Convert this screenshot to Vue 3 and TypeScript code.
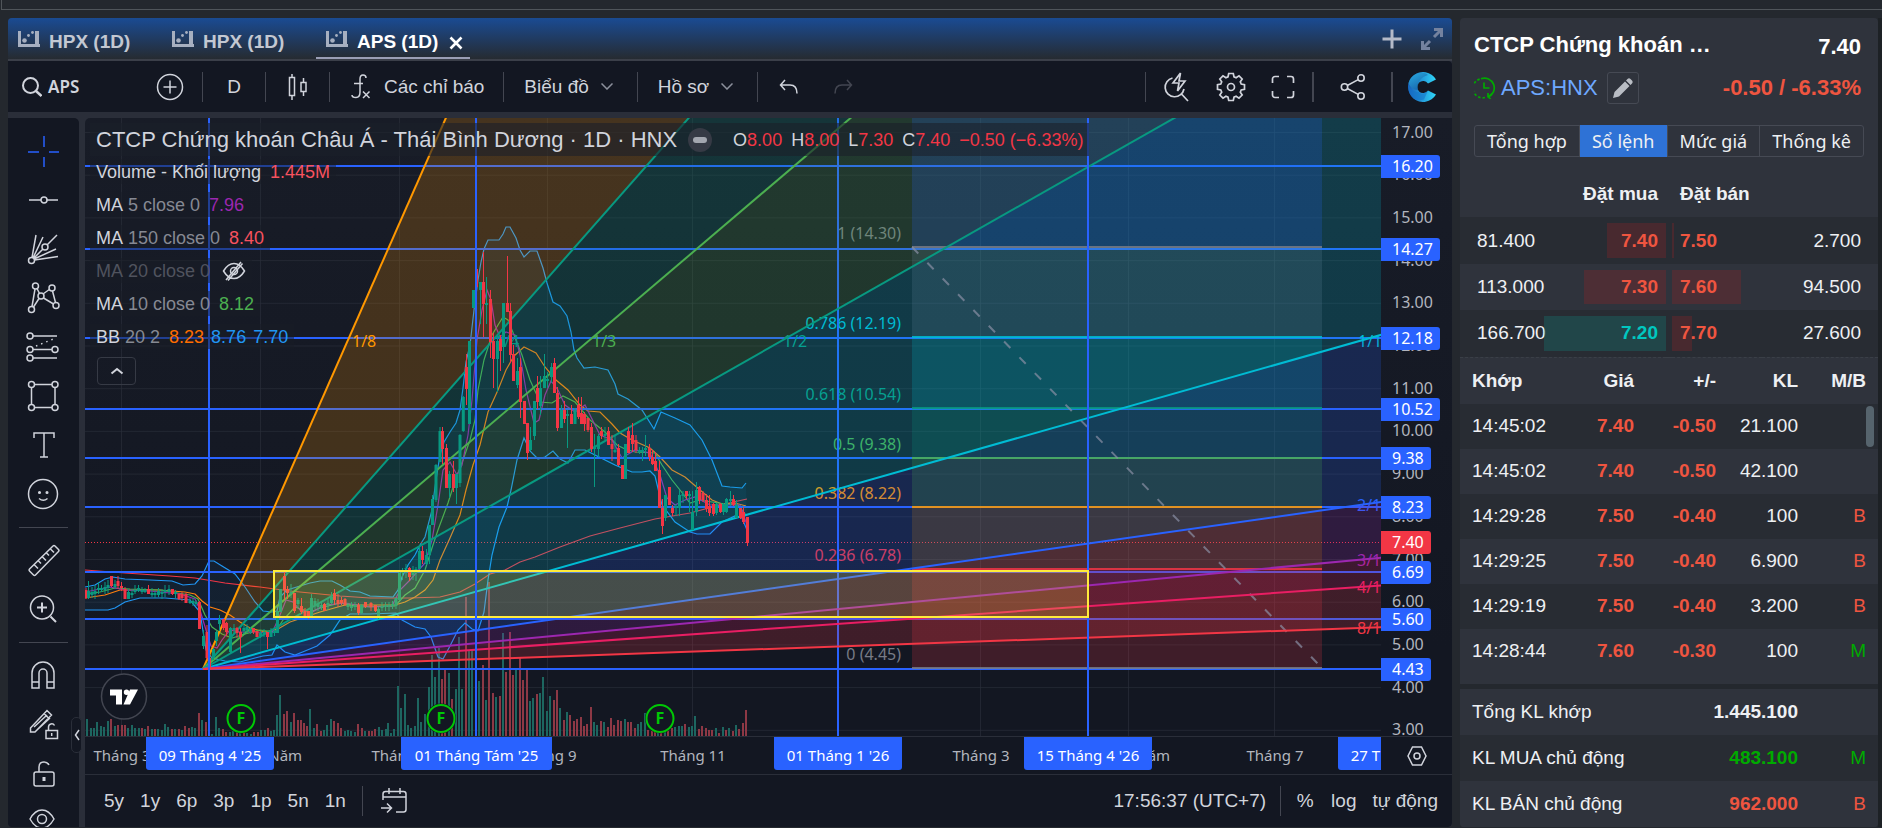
<script setup lang="ts">
import { ref } from 'vue'

interface Candle { x: number; high: number; top: number; bottom: number; low: number; up: boolean }
interface Bar { x: number; h: number; up: boolean }

const tabs = ['HPX (1D)', 'HPX (1D)', 'APS (1D)']
const activeTab = ref(2)

// x, wick top, body top, body bottom, wick bottom, direction
const candleSource = `
86 588 590 598 599 r;88.5 581 591 598 599 g;92 587 592 595 598 g;95 585 591 594 599 g;98.5 582 588 590 594 g;101.5 585 588 590 592 g;105 582 587 590 594 g;108 580 585 588 593 g;
111.5 576 576 586 587 r;115 580 584 587 589 g;118 576 581 586 589 r;121.5 582 586 588 591 r;125 587 589 599 599 r;128.5 589 592 599 599 g;132 589 593 595 598 g;135 585 590 592 594 g;138.5 585 588 591 592 g;
142 587 590 592 594 g;145 588 590 592 593 g;148.5 585 589 594 594 r;152 588 593 595 597 g;155 590 593 595 598 g;158.5 588 591 595 597 g;162 589 592 594 599 g;165 585 590 592 597 g;169 585 589 592 595 g;172.5 589 589 594 595 r;175.5 590 592 594 598 g;
179 593 594 599 600 r;182 592 594 598 601 r;186 593 594 603 603 r;190 598 601 603 604 g;193 598 601 603 606 g;196 600 602 604 606 g;199.5 601 602 629 629 r;203.5 630 636 646 649 g;207 625 632 658 660 r;209.5 655 658 668 668 r;213.5 648 649 658 660 g;
216.5 631 632 641 646 g;219.5 615 619 624 631 g;223.5 619 619 628 630 r;226.5 622 623 632 636 r;230.5 627 628 652 653 g;234 624 628 630 634 g;237 627 628 633 638 r;240.5 628 632 637 653 r;244 625 628 631 634 g;247 624 627 630 633 g;250.5 627 629 632 634 g;253.5 628 628 632 634 r;257 631 631 637 637 r;260.5 631 633 636 638 g;
264 629 632 634 637 g;267.5 632 632 637 649 r;271 628 632 637 637 g;274.5 630 631 633 636 g;277.5 611 611 633 633 g;280.5 589 589 612 612 g;284.5 572 576 590 600 r;287.5 586 589 593 599 r;291 584 592 594 598 g;294.5 593 593 611 613 r;298 598 600 604 608 g;301.5 598 606 612 614 r;305 608 611 616 617 r;308.5 611 611 617 619 r;
311.5 594 598 617 617 g;315 598 601 605 609 g;318 599 604 607 611 g;321.5 602 605 607 610 g;324.5 603 604 611 611 r;328 598 603 605 610 g;331.5 592 597 603 604 g;334.5 589 593 600 605 r;338 594 600 604 607 r;341.5 597 600 603 605 r;345 598 599 605 606 r;348 603 605 607 610 g;351.5 602 606 608 611 g;
355 602 605 607 610 g;358.5 603 605 613 615 r;361.5 604 605 613 614 g;365.5 602 602 607 608 r;371 602 603 607 611 r;375.5 605 605 611 612 r;378.5 607 609 616 619 g;382 602 606 608 611 g;385.5 602 605 607 611 g;389 602 605 607 611 g;392.5 601 604 606 609 g;396 598 598 606 609 g;399.5 572 573 600 600 g;402.5 568 571 573 580 g;406 564 568 569 578 g;409.5 567 568 577 581 r;
413 566 570 575 580 g;416 567 569 573 581 g;419.5 545 551 569 569 g;422.5 546 551 560 564 r;426.5 549 555 564 565 g;429.5 525 525 555 564 g;432.5 495 499 525 525 g;436 464 465 500 502 g;440 427 431 462 462 g;442.5 427 431 449 464 r;446.5 444 448 488 488 r;449.5 471 474 488 498 g;453.5 461 474 488 492 r;456.5 474 474 488 504 g;460 434 435 483 487 g;
463.3 396 397 431 432 g;466.5 354 367 389 405 r;469.5 341 341 424 424 g;473.5 290 290 308 308 g;476.5 252 269 287 294 r;480.5 282 282 290 324 g;483.5 252 282 304 337 r;486.5 277 303 305 324 g;490.5 290 299 342 358 r;493.5 333 341 359 388 r;497.5 335 341 359 392 g;500.5 335 339 351 371 r;503.5 303 303 347 363 g;507.5 256 303 312 312 r;510.5 303 311 355 363 r;
513.5 345 354 381 381 r;517.5 358 371 385 388 g;520.5 358 367 402 418 r;524.5 401 401 424 424 r;527.5 423 423 453 460 r;530.5 427 440 450 451 g;534.5 401 401 436 440 g;537.5 376 388 402 409 r;540.5 376 388 406 415 g;544.5 354 376 388 388 g;547.5 372 379 381 388 g;551.5 363 367 377 383 g;554.5 358 363 393 393 r;557.5 387 393 428 431 r;561.5 405 410 428 428 g;564.5 401 410 419 423 r;567.5 410 414 416 448 g;
571.5 405 414 424 424 r;575 408 410 424 424 g;578.5 397 405 417 419 r;581.5 397 413 424 424 r;584.5 412 414 424 431 r;588 418 418 430 432 r;591.5 423 427 449 452 r;594.5 434 447 449 487 g;598.5 434 436 449 457 g;601.5 427 431 436 439 r;605 427 434 436 440 g;608.5 427 431 445 445 r;612 435 444 449 461 r;615 435 450 452 453 g;618.5 444 448 465 466 r;622.5 465 465 479 479 r;
625.5 444 444 479 479 g;628.5 427 431 453 453 r;632.5 423 435 444 452 r;636 435 440 450 453 r;639.5 447 450 452 454 g;642.5 447 450 452 461 g;645.5 435 448 450 456 g;649.5 444 448 457 461 r;652.5 450 457 464 465 r;655.5 452 461 471 471 r;659.5 461 470 508 508 r;662.5 499 508 526 534 r;665.5 495 495 518 521 g;669.5 487 487 505 505 r;672.5 505 508 513 516 r;676 504 506 508 516 g;679.5 490 495 508 516 g;
683 491 494 496 503 g;686.5 491 491 496 499 r;689.5 491 494 496 512 g;692.5 491 512 530 530 g;696.5 482 490 512 516 g;699.5 486 487 500 504 r;703 491 493 500 502 r;706.5 494 500 509 512 r;709.5 495 506 513 516 r;713.5 503 504 514 516 r;716.5 503 504 513 515 g;720.5 503 504 512 513 r;723.5 503 504 512 515 g;726.5 498 499 512 513 g;730.5 491 499 501 506 g;733.5 495 499 505 506 r;736.5 500 505 518 518 g;740.5 508 508 518 519 r;743.5 507 512 522 524 r;747.5 517 517 543 546 r`

const candles: Candle[] = candleSource.split(';').map((row) => {
  const [x, high, top, bottom, low, dir] = row.trim().split(' ')
  return { x: +x, high: +high, top: +top, bottom: +bottom, low: +low, up: dir === 'g' }
})

const volumeSource = `87,17g 91,8g 94,8g 97,14g 101,10g 104,9g 108,15g 111,17r 115,10g 118,11r 122,11r 125,11r 128,8g 132,11g 135,8g 139,8g 142,8r 145,7g 148,10r 152,7g 155,7r 158,7g 162,6g 165,12g 168,9g 172,7r 175,7g 179,7r 182,6g 185,10r 189,8r 192,9g 195,8g 199,23r 202,16g 206,14r 209,30r 212,2g 216,19g 219,8g 223,7r 226,4r 230,4g 233,5g 237,4r 240,4g 244,4r 247,3g 251,2g 254,4r 258,4r 261,6g 265,6g 268,8r 271,5g 274,6g 277,21g 280,41g 284,22r 287,25r 291,14g 294,23r 298,16r 301,16r 304,13r 307,10r 310,27g 314,8g 317,12r 321,5r 324,6g 327,11g 331,17g 334,15r 338,13r 341,8r 345,5g 348,6g 351,5g 355,4g 358,12r 362,8r 365,5g 369,5r 372,5r 375,7r 379,9g 382,6g 386,7g 388,13g 391,3g 394,7g 398,50g 401,28g 405,42g 408,11g 411,8g 415,10g 418,38g 421,14g 425,22g 429,49g 432,81g 435,59g 439,88g 442,57r 445,66r 449,63g 452,37r 456,47g 459,99g 462,47g 466,139r 469,85g 472,87g 476,62r 479,55g 483,71r 486,36g 489,154r 493,43r 496,39g 500,40r 503,103g 506,64r 510,104r 513,61r 516,67g 520,78r 523,56r 527,68r 530,35g 533,38g 537,42r 540,43g 543,59g 547,25g 550,40g 554,36r 557,46r 560,28g 564,16r 567,24g 570,21r 574,15r 577,17r 581,19r 584,10r 587,12r 591,29r 594,14g 597,11g 601,15r 604,14g 608,9r 611,18r 614,11r 618,16r 621,15r 625,17g 628,14r 631,14r 635,8r 638,12g 641,14g 645,23g 648,6r 652,5r 655,4r 658,4g 661,4r 665,8g 668,6r 672,8r 675,9g 679,10g 682,10g 685,12r 689,9g 692,10g 695,20g 699,7r 702,10r 706,8r 709,6r 712,6r 716,8g 719,3r 723,9g 726,6r 729,8g 733,5r 736,11g 739,7r 743,13r 746,26r`

const volumes: Bar[] = volumeSource.split(' ').map((item) => {
  const [x, rest] = item.split(',')
  return { x: +x, h: parseInt(rest, 10), up: rest.endsWith('g') }
})

const bandUpper = '85,587 95,585 105,579 113,577 125,579 150,580 172,581 183,585 195,584 202,576 209,561 214,561 222,566 235,574 245,587 255,602 263,611 272,612 277,611 280,597 287,590 300,586 310,583 320,581 332,581 340,585 350,591 360,592 370,596 393,597 398,590 402,577 408,565 415,555 420,545 425,537 432,510 436,480 440,455 444,442 450,432 456,423 460,410 463,388 466,362 470,345 474,310 478,280 481,262 484,249 488,240 491,240 499,240 503,234 506,227 510,227 516,238 520,250 524,257 530,251 537,251 543,268 547,283 553,302 560,306 567,316 571,332 574,350 577,358 584,368 595,367 608,370 615,384 618,394 628,399 642,410 654,429 661,412 675,418 690,425 702,440 712,460 722,486 730,487 742,488 746,483'
const bandLower = '85,610 108,610 115,608 125,602 140,598 165,598 190,600 200,612 206,650 212,658 225,661 240,662 255,658 263,656 272,655 277,645 285,652 295,655 305,651 317,646 330,635 340,620 350,614 370,614 396,613 402,620 415,627 425,629 431,637 438,657 443,659 450,646 458,630 465,623 472,629 478,631 484,612 488,580 492,555 499,527 507,507 511,490 517,460 524,438 530,451 538,459 545,457 553,451 560,459 568,463 575,450 585,450 595,455 605,460 615,465 622,468 632,472 642,472 650,471 655,476 662,505 675,522 690,532 697,534 710,534 722,522 735,516 742,518 747,530'
const bandArea = bandUpper + ' ' + bandLower.split(' ').reverse().join(' ')

const averages = [
  { color: '#f23645', points: '85,570 125,573 170,576 195,578 225,583 260,587 290,591 340,596 370,598 410,598 440,597 460,592 475,584 490,574 505,570 520,562 535,557 560,547 590,536 620,528 655,519 690,513 720,505 747,499' },
  { color: '#ff7f0e', points: '85,598 105,595 120,590 140,590 160,590 185,592 195,594 202,601 210,607 220,610 230,615 240,622 250,628 265,632 278,629 290,622 305,617 320,612 345,605 380,605 395,605 405,602 415,597 425,590 433,580 440,560 450,538 460,515 466,490 473,465 480,445 488,412 498,390 506,370 514,356 524,347 536,353 545,367 556,380 568,390 580,405 588,411 600,412 612,424 620,433 632,440 650,448 660,457 672,470 685,477 700,490 712,500 722,504 735,503 746,506' },
  { color: '#4caf50', points: '85,594 100,592 115,588 130,589 160,590 190,595 198,599 205,615 212,627 222,634 232,638 245,634 260,630 275,632 283,620 295,607 310,612 320,608 340,603 360,607 395,606 405,595 415,588 425,570 432,548 438,530 448,503 456,478 463,460 470,440 475,420 478,390 484,360 492,335 498,325 503,317 508,320 514,335 522,355 530,380 540,402 552,403 563,396 575,402 590,420 605,432 617,445 625,449 635,452 655,453 662,465 672,480 680,490 690,503 700,500 712,502 725,504 738,505 746,515' },
  { color: '#9c27b0', points: '85,592 110,587 125,590 150,591 180,594 195,599 200,610 206,630 211,646 217,648 222,640 230,630 240,632 255,632 272,633 280,615 286,600 293,602 300,610 312,612 325,605 345,603 370,607 392,606 400,590 410,580 425,563 432,540 438,505 443,470 450,462 457,475 462,465 468,435 472,400 477,340 482,310 487,290 491,300 495,325 500,337 506,332 515,335 520,355 526,390 534,423 539,420 545,395 551,381 558,390 565,405 575,412 585,405 600,435 612,440 622,458 635,450 650,453 660,475 667,498 675,505 685,500 695,497 710,505 725,505 740,505 747,525' },
]

const priceY = (price: number) => 132.5 + (17 - price) * 42.7
const ticks = Array.from({ length: 15 }, (_, i) => 17 - i)
const levels = [166, 249, 338, 409, 458, 507, 572, 619, 669]
const priceTags = [
  { y: 166, text: '16.20', hot: false }, { y: 249, text: '14.27', hot: false }, { y: 338, text: '12.18', hot: false },
  { y: 409, text: '10.52', hot: false }, { y: 458, text: '9.38', hot: false }, { y: 507, text: '8.23', hot: false },
  { y: 542, text: '7.40', hot: true }, { y: 572, text: '6.69', hot: false }, { y: 619, text: '5.60', hot: false }, { y: 669, text: '4.43', hot: false },
]
const months = [
  { x: 122, text: 'Tháng 3' }, { x: 261, text: 'Tháng Năm' }, { x: 400, text: 'Tháng 7' }, { x: 548, text: 'Tháng 9' },
  { x: 693, text: 'Tháng 11' }, { x: 981, text: 'Tháng 3' }, { x: 1129, text: 'Tháng Năm' }, { x: 1275, text: 'Tháng 7' },
]
const dateTags = [
  { x: 146, w: 128, text: "09 Tháng 4 '25" }, { x: 401, w: 151, text: "01 Tháng Tám '25" }, { x: 774, w: 128, text: "01 Tháng 1 '26" },
  { x: 1024, w: 128, text: "15 Tháng 4 '26" }, { x: 1338, w: 128, text: "27 Tháng 7 '26" },
]

// Gann fan: every ray starts at one pivot; slope is the fraction of the 1/1 ray
const pivot = { x: 203, y: 669 }
const unit = 551 / 1942.8
const fanEnd = 3000
const rays = [
  { k: 8, line: '#ff9800', fill: '#ff9800', label: '1/8', lx: 352, ly: 347 },
  { k: 4, line: '#089981', fill: '#089981', label: '1/4', lx: 495, ly: 347 },
  { k: 3, line: '#4caf50', fill: '#4caf50', label: '1/3', lx: 592, ly: 347 },
  { k: 2, line: '#089981', fill: '#00bcd4', label: '1/2', lx: 783, ly: 347 },
  { k: 1, line: '#00bcd4', fill: '#2962ff', label: '1/1', lx: 1358, ly: 347 },
  { k: 1 / 2, line: '#2962ff', fill: '#9c27b0', label: '2/1', lx: 1357, ly: 511 },
  { k: 1 / 3, line: '#9c27b0', fill: '#e91e63', label: '3/1', lx: 1357, ly: 566 },
  { k: 1 / 4, line: '#e91e63', fill: '#f23645', label: '4/1', lx: 1357, ly: 593 },
  { k: 1 / 8, line: '#f23645', fill: 'none', label: '8/1', lx: 1357, ly: 634 },
]
const rayY = (k: number) => pivot.y - (fanEnd - pivot.x) * unit * k
const wedge = (i: number) => {
  const next = rays[i + 1]
  return next ? `${pivot.x},${pivot.y} ${fanEnd},${rayY(rays[i].k)} ${fanEnd},${rayY(next.k)}` : ''
}

const fibs = [
  { y: 247, color: '#787b86', label: '1 (14.30)' },
  { y: 337, color: '#00bcd4', label: '0.786 (12.19)' },
  { y: 408, color: '#089981', label: '0.618 (10.54)' },
  { y: 458, color: '#4caf50', label: '0.5 (9.38)' },
  { y: 507, color: '#ff9800', label: '0.382 (8.22)' },
  { y: 569, color: '#f23645', label: '0.236 (6.78)' },
  { y: 668, color: '#787b86', label: '0 (4.45)' },
]
const fibZones = [
  { y: 118, h: 129, fill: '#2962ff', o: 0.2 }, { y: 247, h: 90, fill: '#6488a0', o: 0.2 }, { y: 337, h: 71, fill: '#00bcd4', o: 0.2 },
  { y: 408, h: 50, fill: '#089981', o: 0.2 }, { y: 458, h: 49, fill: '#4caf50', o: 0.2 }, { y: 507, h: 62, fill: '#ff9800', o: 0.15 },
  { y: 569, h: 99, fill: '#f23645', o: 0.2 },
]
const events = [241, 441, 660]

const legend = [
  { name: 'Volume - Khối lượng', args: '', values: [{ t: '1.445M', c: 'red' }], hidden: false },
  { name: 'MA', args: '5 close 0', values: [{ t: '7.96', c: 'purple' }], hidden: false },
  { name: 'MA', args: '150 close 0', values: [{ t: '8.40', c: 'red' }], hidden: false },
  { name: 'MA', args: '20 close 0', values: [], hidden: true },
  { name: 'MA', args: '10 close 0', values: [{ t: '8.12', c: 'green' }], hidden: false },
  { name: 'BB', args: '20 2', values: [{ t: '8.23', c: 'orange' }, { t: '8.76', c: 'blue' }, { t: '7.70', c: 'blue' }], hidden: false },
]
const ohlc = [['O', '8.00'], ['H', '8.00'], ['L', '7.30'], ['C', '7.40']]
const ranges = ['5y', '1y', '6p', '3p', '1p', '5n', '1n']

const views = ['Tổng hợp', 'Sổ lệnh', 'Mức giá', 'Thống kê']
const activeView = ref(1)
const book = [
  { bv: '81.400', bid: '7.40', bw: 59, floor: false, ask: '7.50', aw: 2, av: '2.700' },
  { bv: '113.000', bid: '7.30', bw: 82, floor: false, ask: '7.60', aw: 69, av: '94.500' },
  { bv: '166.700', bid: '7.20', bw: 122, floor: true, ask: '7.70', aw: 20, av: '27.600' },
]
const trades = [
  ['14:45:02', '7.40', '-0.50', '21.100', ''],
  ['14:45:02', '7.40', '-0.50', '42.100', ''],
  ['14:29:28', '7.50', '-0.40', '100', 'B'],
  ['14:29:25', '7.50', '-0.40', '6.900', 'B'],
  ['14:29:19', '7.50', '-0.40', '3.200', 'B'],
  ['14:28:44', '7.60', '-0.30', '100', 'M'],
]
</script>

<template>
  <div class="page">
    <div class="topline"></div>
    <main class="columns">
      <section class="terminal">
        <header class="tabs">
          <button v-for="(t, i) in tabs" :key="i" class="tab" :class="{ active: i === activeTab }" @click="activeTab = i">
            <svg width="22" height="18" viewBox="0 0 22 18"><path d="M1.500 1v14.500H22" fill="none" stroke="currentColor" stroke-width="3" /><path d="M17 1h4v14h-4z" fill="currentColor" /><circle cx="6.500" cy="10.500" r="2.300" fill="currentColor" /><circle cx="10.500" cy="5.500" r="1.400" fill="currentColor" /><circle cx="14.500" cy="2.500" r="1.400" fill="currentColor" /></svg>
            <span>{{ t }}</span>
            <svg v-if="i === activeTab" class="close" width="14" height="14" viewBox="0 0 14 14"><path d="M1.500 1.500l11 11m0-11l-11 11" stroke="#fff" stroke-width="2.600" /></svg>
          </button>
          <span class="grow"></span>
          <button class="head-btn" aria-label="Thêm"><svg width="20" height="20" viewBox="0 0 20 20"><path d="M10 .5v19M.5 10h19" stroke="#b4bac8" stroke-width="3" /></svg></button>
          <button class="head-btn" aria-label="Mở rộng"><svg width="24" height="24" viewBox="0 0 24 24" fill="none" stroke="#74829f" stroke-width="3"><path d="M14 10l7-7M14 2.500h7.500V10M10 14l-7 7M2.500 14v7.500H10" /></svg></button>
        </header>

        <div class="toolbar">
          <button class="search">
            <svg width="20" height="20" viewBox="0 0 20 20" fill="none" stroke="currentColor" stroke-width="2"><circle cx="8.500" cy="8.500" r="7.500" /><path d="M14 14l5.500 5" stroke-width="2.500" /></svg>
            APS
          </button>
          <button class="w45" aria-label="So sánh"><svg width="28" height="28" viewBox="0 0 28 28" fill="none" stroke="currentColor" stroke-width="1.500"><circle cx="14" cy="14" r="12.500" /><path d="M14 7.500v13M7.500 14h13" /></svg></button>
          <i class="sep gap-left"></i>
          <button class="w62">D</button>
          <i class="sep"></i>
          <button class="w63" aria-label="Nến"><svg width="20" height="28" viewBox="0 0 20 28" fill="none" stroke="currentColor" stroke-width="1.500"><path d="M1.500 4.500h5v18h-5zM4 1v3.500M4 22.500V27M13 9.500h5v9h-5zM15.500 5v4.500M15.500 18.500V23" /></svg></button>
          <i class="sep"></i>
          <button class="fx">
            <svg width="20" height="26" viewBox="0 0 20 26" fill="none" stroke="currentColor" stroke-width="1.500"><path d="M15 4c0-2-1-3-3-3S9 2.500 9 5v13c0 4-1.500 5.500-4 5.500-2.500 0-4-.5-4-2.500M3 9.500h9M12 17.500l6.500 6.500M18.500 17.500L12 24" /></svg>
            Các chỉ báo
          </button>
          <i class="sep"></i>
          <button class="menu">Biểu đồ <svg width="12" height="7" viewBox="0 0 12 7"><path d="M.5.5L6 6 11.500.5" fill="none" stroke="#8c909c" stroke-width="1.500" /></svg></button>
          <i class="sep"></i>
          <button class="menu">Hồ sơ <svg width="12" height="7" viewBox="0 0 12 7"><path d="M.5.5L6 6 11.500.5" fill="none" stroke="#8c909c" stroke-width="1.500" /></svg></button>
          <i class="sep"></i>
          <button class="w62" aria-label="Hoàn tác"><svg width="20" height="16" viewBox="0 0 20 16" fill="none" stroke="currentColor" stroke-width="1.500"><path d="M6 1L1.500 6 6 11M1.500 6H11c5 0 7 3 7 8.500" /></svg></button>
          <button class="w45 dim" aria-label="Làm lại"><svg width="20" height="16" viewBox="0 0 20 16" fill="none" stroke="currentColor" stroke-width="1.500"><path d="M14 1l4.500 5-4.500 5M18.500 6H9c-5 0-7 3-7 8.500" /></svg></button>
          <span class="grow"></span>
          <i class="sep"></i>
          <button class="w62" aria-label="Tìm nhanh"><svg width="28" height="30" viewBox="0 0 28 30" fill="none" stroke="currentColor" stroke-width="1.700"><path d="M9.500 6A9.500 9.500 0 1 0 21 17M18.500 22l6.500 7M17.500 1l-7.500 10h6l-1.500 8L22 9h-6z" /></svg></button>
          <button class="w45" aria-label="Cài đặt"><svg width="30" height="30" viewBox="0 0 30 30" fill="none" stroke="currentColor" stroke-width="1.700"><circle cx="15" cy="15" r="3.500" /><path d="M12.700 1.500h4.600l.7 3.300 2.100.9 2.900-1.900 3.200 3.200-1.900 2.900.9 2.100 3.300.7v4.600l-3.300.7-.9 2.100 1.900 2.900-3.200 3.200-2.900-1.900-2.100.9-.7 3.300h-4.600l-.7-3.300-2.100-.9-2.900 1.900L3.800 23l1.900-2.900-.9-2.100-3.300-.7v-4.600l3.300-.7.9-2.100L3.800 7 7 3.800l2.900 1.900 2.100-.9z" /></svg></button>
          <button class="w59" aria-label="Toàn màn hình"><svg width="24" height="24" viewBox="0 0 24 24" fill="none" stroke="currentColor" stroke-width="1.700"><path d="M8 1.500H4A2.500 2.500 0 0 0 1.500 4v4M16 1.500h4A2.500 2.500 0 0 1 22.500 4v4M8 22.500H4A2.500 2.500 0 0 1 1.500 20v-4M16 22.500h4a2.500 2.500 0 0 0 2.500-2.500v-4" /></svg></button>
          <i class="sep thick"></i>
          <button class="w77" aria-label="Chia sẻ"><svg width="26" height="26" viewBox="0 0 26 26" fill="none" stroke="currentColor" stroke-width="1.600"><circle cx="4.500" cy="13" r="3.200" /><circle cx="21" cy="4" r="3.200" /><circle cx="21" cy="22" r="3.200" /><path d="M7.300 11.500L18.200 5.600M7.300 14.500l10.900 5.900" /></svg></button>
          <i class="sep thick"></i>
          <button class="w59" aria-label="Trang chủ">
            <svg width="29" height="30" viewBox="0 0 29 30">
              <defs>
                <linearGradient id="cg" x1="0" y1="0" x2="1" y2="0"><stop offset="0" stop-color="#1a5fbb" /><stop offset="1" stop-color="#2fd6f8" /></linearGradient>
                <linearGradient id="cl" x1="0" y1="0" x2="1" y2="1"><stop offset="0" stop-color="#2fc4ee" /><stop offset="1" stop-color="#0d3c8c" /></linearGradient>
              </defs>
              <path d="M28 7.500A15 15 0 1 0 28 22.500L20 18.500A6 6 0 1 1 20 11.500z" fill="url(#cg)" />
              <path d="M9 1.500C14 0 18 1 20 3 13 5 9 10 10 18 4 18 1 13 .5 11 2 6 5 3 9 1.500z" fill="url(#cl)" opacity=".75" />
              <path d="M.5 12C2 18 6 20 11 20c3 3 6 1 9-1.500l-4 9C6 31-1 22 .5 12z" fill="#1373c8" opacity=".55" />
            </svg>
          </button>
        </div>

        <div class="workspace">
          <nav class="tools">
            <button class="accent" aria-label="Con trỏ"><svg viewBox="-18 -18 37 37"><path d="M1-15V-4M1 6v10M-15 1h11M6 1h10" /></svg></button>
            <button aria-label="Đường xu hướng"><svg viewBox="-18 -18 37 37"><circle cx="1" cy="0" r="3" /><path d="M-14 0H-2M4 0h11" /></svg></button>
            <button aria-label="Gann và Fibonacci"><svg viewBox="-18 -18 37 37"><circle cx="-11.500" cy="11.500" r="3" /><circle cx="2" cy="-2" r="3" /><path d="M-11 8.500l4-22.500M-10 9L0-12M-9 9L0 0M4-4L14-14M-9 10L13 0M-8.500 11L15 7.500" /></svg></button>
            <button aria-label="Mẫu hình"><svg viewBox="-18 -18 37 37"><circle cx="-11.500" cy="11.500" r="3" /><circle cx="-7.500" cy="-12" r="3" /><circle cx="-2" cy="-2" r="3" /><circle cx="9" cy="-10" r="3" /><circle cx="13" cy="7.500" r="3" /><path d="M-11 8.500l3-17.500M-6-9.500l2.500 5M0-4l7-5M9.500-7l3 11.500M-9.500 9L-4 .5M.5 0l10 6" /></svg></button>
            <button aria-label="Dự báo"><svg viewBox="-18 -18 37 37"><circle cx="-13" cy="-11" r="3" /><circle cx="-13" cy="2.500" r="3" /><circle cx="-13" cy="11" r="3" /><circle cx="12" cy="2.500" r="3" /><path d="M-10-11h24M-10 2.500H9M-10 11h24" /><path d="M-7-1L13-9" stroke-dasharray="1.500 4" /></svg></button>
            <button aria-label="Hình học"><svg viewBox="-18 -18 37 37"><circle cx="-11.500" cy="-11.500" r="3" /><circle cx="12" cy="-11.500" r="3" /><circle cx="-11.500" cy="11.500" r="3" /><circle cx="12" cy="11.500" r="3" /><path d="M-8.500-11.500H9M-8.500 11.500H9M-11.500-8.500v17M12-8.500v17" /></svg></button>
            <button aria-label="Văn bản"><svg viewBox="-18 -18 37 37"><path d="M-9-7v-5H11v5M1-12v24M-3 12h8" /></svg></button>
            <button aria-label="Biểu tượng"><svg viewBox="-18 -18 37 37"><circle cx="0" cy="0" r="14.500" /><circle cx="-3.500" cy="-1.500" r=".8" /><circle cx="4" cy="-1.500" r=".8" /><path d="M-4 4.500q4.300 3.500 8.500 0" /></svg></button>
            <i class="rule"></i>
            <button aria-label="Thước đo"><svg viewBox="-18 -18 37 37"><path d="M-13.500 9L10-14q1-1 2 0l3.500 3.500q1 1 0 2L-7.500 15q-1 1-2 0l-4-4q-1-1 0-2zM-9 4.500l4 4M-5 .5l3 3M-1-3.500l4 4M3-7.500l3 3M7-11.500l4 4" /></svg></button>
            <button aria-label="Phóng to"><svg viewBox="-18 -18 37 37"><circle cx="-1" cy="-1.500" r="11.500" /><path d="M7.500 7.500L13 13M-6-1.500H4M-1-6.500v10" stroke-width="2" /></svg></button>
            <i class="rule"></i>
            <button aria-label="Nam châm"><svg viewBox="-18 -18 37 37"><path d="M-11 13V-2a11 11 0 0 1 22 0v15H4V-2a4 4 0 0 0-8 0v15zM-11 7h7M4 7h7" /></svg></button>
            <button aria-label="Giữ chế độ vẽ"><svg viewBox="-18 -18 37 37"><path d="M-12.500 4L4-13.500l4.500 4.500L-8 8h-4.500zM1-10.500l4.500 4.500M-9 3L4-9M-6 6L7-6M3 6.500h11.500v8H3zM5.500 6.500V3a3.200 3.200 0 0 1 6-1.500M8.700 9v3" /></svg></button>
            <button aria-label="Khóa"><svg viewBox="-18 -18 37 37"><path d="M-7-1H9a2 2 0 0 1 2 2v10a2 2 0 0 1-2 2H-7a2 2 0 0 1-2-2V1a2 2 0 0 1 2-2zM-4-1v-5q0-5 5-5 3.500 0 5 3" /><path d="M1 4v4" stroke-width="3" /></svg></button>
            <button aria-label="Ẩn hình vẽ"><svg viewBox="-18 -18 37 37"><circle cx="-1" cy="-3" r="4.500" /><path d="M-13-3Q-8-12-1-12T11-3Q6 6-1 6T-13-3z" /></svg></button>
            <button class="handle" aria-label="Thu gọn">
              <svg width="6" height="12" viewBox="0 0 6 12"><path d="M5 1L1.500 6 5 11" fill="none" stroke="currentColor" stroke-width="1.500" /></svg>
            </button>
          </nav>

          <div class="chart">
            <div class="plot">
              <svg class="canvas" aria-label="Biểu đồ giá APS">
                <g transform="translate(-85 -118)">
                  <g stroke="#2a2e39" stroke-opacity=".7">
                    <line v-for="t in ticks" :key="'h' + t" x1="85" x2="3000" :y1="priceY(t)" :y2="priceY(t)" />
                    <line v-for="(m, i) in months" :key="'v' + i" :x1="m.x - .5" :x2="m.x - .5" y1="118" y2="736" />
                  </g>
                  <g>
                    <rect v-for="v in volumes" :key="v.x" :x="v.x - 1" :y="736 - v.h" width="2" :height="v.h" :fill="v.up ? '#1d6660' : '#8d3845'" />
                  </g>
                  <polygon :points="bandArea" fill="#2196f3" fill-opacity=".07" />
                  <g fill="none" stroke-width="1.200">
                    <polyline v-for="a in averages" :key="a.color" :points="a.points" :stroke="a.color" />
                    <polyline :points="bandUpper" stroke="#2196f3" />
                    <polyline :points="bandLower" stroke="#2196f3" />
                  </g>
                  <g stroke="#2962ff" stroke-width="2">
                    <line v-for="y in levels" :key="y" x1="85" x2="3000" :y1="y" :y2="y" />
                  </g>
                  <line x1="85" x2="3000" y1="542.5" y2="542.5" stroke="#f23645" stroke-dasharray="1 2" />
                  <g class="note" text-anchor="end">
                    <text v-for="f in fibs" :key="f.label" x="901" :y="f.y - 8" :fill="f.color">{{ f.label }}</text>
                  </g>
                  <g class="note">
                    <text v-for="r in rays" :key="r.label" :x="r.lx" :y="r.ly" :fill="r.line">{{ r.label }}</text>
                  </g>
                  <line x1="838" x2="838" y1="118" y2="736" stroke="#2962ff" stroke-width="2" />
                  <polygon v-for="(r, i) in rays" :key="'w' + r.label" :points="wedge(i)" :fill="r.fill" fill-opacity=".2" />
                  <rect v-for="z in fibZones" :key="z.y" x="912" :y="z.y" width="410" :height="z.h" :fill="z.fill" :fill-opacity="z.o" />
                  <line v-for="f in fibs" :key="'f' + f.label" x1="912" x2="1322" :y1="f.y" :y2="f.y" :stroke="f.color" stroke-width="2" stroke-opacity=".85" />
                  <line x1="912" y1="247" x2="1322" y2="668" stroke="#8a90a5" stroke-width="2" stroke-dasharray="9 13" stroke-opacity=".7" />
                  <line v-for="r in rays" :key="'l' + r.label" :x1="pivot.x" :y1="pivot.y" :x2="fanEnd" :y2="rayY(r.k)" :stroke="r.line" stroke-width="2" />
                  <g>
                    <template v-for="c in candles" :key="c.x">
                      <rect :x="c.x - .5" :y="c.high" width="1" :height="c.low - c.high" :fill="c.up ? '#089981' : '#f23645'" />
                      <rect :x="c.x - 1.5" :y="c.top" width="3" :height="c.bottom - c.top" :fill="c.up ? '#089981' : '#f23645'" />
                    </template>
                  </g>
                  <rect x="274" y="571" width="814" height="46" fill="#ffeb3b" fill-opacity=".2" stroke="#ffeb3b" stroke-width="2" />
                  <g stroke="#2962ff" stroke-width="2">
                    <line x1="209" x2="209" y1="118" y2="736" />
                    <line x1="476" x2="476" y1="118" y2="736" />
                    <line x1="1088" x2="1088" y1="118" y2="570" />
                    <line x1="1088" x2="1088" y1="618" y2="736" />
                  </g>
                  <g v-for="x in events" :key="'e' + x">
                    <circle :cx="x" cy="718.5" r="15" fill="#131722" />
                    <circle :cx="x" cy="718.5" r="13.5" fill="#131722" stroke="#00c805" stroke-width="2" />
                    <text class="event" :x="x" y="724" text-anchor="middle">F</text>
                  </g>
                  <circle cx="124" cy="696.5" r="22.5" fill="#131722" stroke="#434651" stroke-width="1.500" />
                  <path d="M110 689.500h12v15h-6v-9h-6zM130 704.500h-6.500l6.500-15h8zM126.500 689.500a2.700 2.700 0 1 1 0 5.400 2.700 2.700 0 0 1 0-5.400z" fill="#fff" />
                </g>
              </svg>
              <div class="overlay">
                <div class="title-row">
                  <h1>CTCP Chứng khoán Châu Á - Thái Bình Dương · 1D · HNX</h1>
                  <span class="pill"><i></i></span>
                  <span v-for="p in ohlc" :key="p[0]" class="ohlc">{{ p[0] }}<b>{{ p[1] }}</b></span>
                  <span class="ohlc"><b>−0.50 (−6.33%)</b></span>
                </div>
                <div v-for="(l, i) in legend" :key="i" class="legend" :class="{ off: l.hidden }">
                  <span>{{ l.name }}</span>
                  <span v-if="l.args" class="args">{{ l.args }}</span>
                  <span v-for="(v, j) in l.values" :key="j" class="val" :class="v.c">{{ v.t }}</span>
                  <svg v-if="l.hidden" class="eye" width="24" height="20" viewBox="0 0 24 20" fill="none" stroke="#d1d4dc" stroke-width="1.500"><path d="M1.500 10Q6 2.500 12 2.500T22.500 10Q18 17.500 12 17.500T1.500 10zM19 1L4 19M20.500 2.500L6 19.500" /><circle cx="12" cy="10" r="3.500" /></svg>
                </div>
                <button class="collapse" aria-label="Thu gọn chú giải"><svg width="14" height="8" viewBox="0 0 14 8"><path d="M1.500 6.500L7 2l5.500 4.500" fill="none" stroke="#d1d4dc" stroke-width="2" /></svg></button>
              </div>
            </div>
            <svg class="price-axis" aria-label="Thang giá">
              <g transform="translate(0 -118)">
                <text v-for="t in ticks" :key="t" x="11" :y="priceY(t) + 5" class="tick price-text">{{ t.toFixed(2) }}</text>
                <g v-for="p in priceTags" :key="p.text">
                  <rect x="-4" :y="p.y - 11" :width="p.text.length > 4 ? 63 : 54" height="23" rx="3" :fill="p.hot ? '#f23645' : '#2962ff'" />
                  <text x="11" :y="p.y + 6" class="tick price-text on">{{ p.text }}</text>
                </g>
              </g>
            </svg>
            <svg class="time-axis" aria-label="Thang thời gian">
              <g transform="translate(-85 0)">
                <text v-for="(m, i) in months" :key="i" :x="m.x" y="24" text-anchor="middle" class="tick">{{ m.text }}</text>
                <g v-for="d in dateTags" :key="d.x">
                  <rect :x="d.x" y="-4" :width="d.w" height="37" rx="3" fill="#2962ff" />
                  <text :x="d.x + d.w / 2" y="24" text-anchor="middle" class="tick on">{{ d.text }}</text>
                </g>
              </g>
            </svg>
            <button class="axis-btn" aria-label="Cài đặt thang"><svg width="20" height="20" viewBox="0 0 20 20" fill="none" stroke="currentColor" stroke-width="1.500"><path d="M5.500 1h9l4.500 9-4.500 9h-9L1 10z" /><circle cx="10" cy="10" r="3" /></svg></button>
            <footer class="range-bar">
              <button v-for="r in ranges" :key="r">{{ r }}</button>
              <i class="sep"></i>
              <button class="calendar" aria-label="Đi tới ngày"><svg width="27" height="26" viewBox="0 0 27 26" fill="none" stroke="currentColor" stroke-width="1.500"><path d="M2 12V6a2.500 2.500 0 0 1 2.500-2.500h18A2.500 2.500 0 0 1 25 6v15.500a2.500 2.500 0 0 1-2.500 2.500H15M2 9h23M8 0v6M19 0v6M0 20h10M6 15.500l4.500 4.500L6 24.500" /></svg></button>
              <span class="grow"></span>
              <button class="clock">17:56:37 (UTC+7)</button>
              <i class="sep"></i>
              <button>%</button>
              <button>log</button>
              <button>tự động</button>
            </footer>
          </div>
        </div>
      </section>

      <aside class="quote">
        <div class="quote-head">
          <h2>CTCP Chứng khoán …</h2>
          <strong>7.40</strong>
        </div>
        <div class="quote-sub">
          <svg width="22" height="22" viewBox="0 0 22 22" fill="none" stroke="#0a0" stroke-width="1.700"><path d="M7 1.800A9.500 9.500 0 1 1 14 20" /><path d="M11 20.500A9.500 9.500 0 0 1 6 2" stroke-dasharray="2.500 2" /><path d="M10 5.500V11h5.500M18 16.500l-3.500 3.500 2 2M14 16v4.500" /></svg>
          <a href="#">APS:HNX</a>
          <button class="edit" aria-label="Sửa"><svg width="20" height="20" viewBox="0 0 20 20"><path d="M0 20l1.500-6L12 3.500 16.500 8 6 18.500zM13 2.500L14.500 1q1.500-1.300 3 0l1.500 1.500q1.300 1.500 0 3L17.500 7z" fill="#b9bdc4" /></svg></button>
          <strong>-0.50 / -6.33%</strong>
        </div>
        <div class="switch">
          <button v-for="(v, i) in views" :key="v" :class="{ on: i === activeView }" @click="activeView = i">{{ v }}</button>
        </div>
        <table class="book">
          <colgroup><col class="c84"><col class="c122"><col class="c6"><col class="c90"><col></colgroup>
          <thead><tr><th></th><th class="r">Đặt mua</th><th></th><th class="l">Đặt bán</th><th></th></tr></thead>
          <tbody>
            <tr v-for="b in book" :key="b.bid">
              <td class="bv">{{ b.bv }}</td>
              <td class="r price" :class="{ floor: b.floor }"><i class="bar right" :style="{ width: b.bw + 'px' }"></i><b>{{ b.bid }}</b></td>
              <td></td>
              <td class="l price"><i class="bar" :style="{ width: b.aw + 'px' }"></i><b>{{ b.ask }}</b></td>
              <td class="av">{{ b.av }}</td>
            </tr>
          </tbody>
        </table>
        <div class="trades-wrap">
          <table class="trades">
            <colgroup><col><col class="c80"><col class="c82"><col class="c82"><col class="c80"></colgroup>
            <thead><tr><th>Khớp</th><th>Giá</th><th>+/-</th><th>KL</th><th>M/B</th></tr></thead>
            <tbody>
              <tr v-for="(t, i) in trades" :key="i">
                <td>{{ t[0] }}</td><td><b>{{ t[1] }}</b></td><td><b>{{ t[2] }}</b></td><td>{{ t[3] }}</td><td :class="t[4] === 'M' ? 'buy' : 'sell'">{{ t[4] }}</td>
              </tr>
            </tbody>
          </table>
          <i class="thumb"></i>
        </div>
        <table class="trades totals">
          <colgroup><col><col class="c122"><col class="c80"></colgroup>
          <tbody>
            <tr><td>Tổng KL khớp</td><td><strong>1.445.100</strong></td><td></td></tr>
            <tr><td>KL MUA chủ động</td><td class="buy"><strong>483.100</strong></td><td class="buy">M</td></tr>
            <tr><td>KL BÁN chủ động</td><td class="sell"><strong>962.000</strong></td><td class="sell">B</td></tr>
          </tbody>
        </table>
      </aside>
    </main>
  </div>
</template>

<style>
html, body { margin: 0; background: #24282e; }
</style>

<style scoped>
.page { height: 100vh; min-height: 600px; display: flex; flex-direction: column; overflow: hidden; background: #24282e; color: #d1d4dc; font: 19px/24px "Liberation Sans", Arial, sans-serif; box-sizing: border-box; padding-bottom: 1px; }
.page * { box-sizing: border-box; }
button { font: inherit; color: inherit; background: none; border: 0; padding: 0; margin: 0; cursor: pointer; display: flex; align-items: center; justify-content: center; flex: none; white-space: nowrap; }
.grow { flex: 1; }
.topline { height: 10px; margin: 0 0 8px 1px; flex: none; border-left: 1px solid #50555a; border-bottom: 1px solid #50555a; }
.columns { flex: 1; min-height: 0; display: flex; gap: 8px; padding-left: 8px; border-right: 4px solid #1d2125; }
.terminal { flex: 1; min-width: 0; display: flex; flex-direction: column; background: #2a2e39; border-radius: 4px; overflow: hidden; }

.tabs { height: 43px; flex: none; display: flex; background: linear-gradient(#1a4b93, #262b31); border-bottom: 2px solid #3b3f49; }
.tab { width: 154px; justify-content: flex-start; padding: 6px 0 0 10px; font-weight: 700; color: #c3c8d2; }
.tab > svg:first-child { margin-top: -6px; color: #a6afc0; }
.tab span { margin-left: 9px; }
.tab.active { color: #fff; border-bottom: 2px solid #9a9eb5; padding-top: 8px; }
.tab .close { margin: 3px 0 0 11px; }
.head-btn { width: 40px; }

.toolbar { height: 51px; flex: none; display: flex; align-items: center; background: #131722; border-radius: 0 4px 0 0; }
.toolbar button { height: 100%; }
.search { width: 139px; justify-content: flex-start; padding-left: 14px; gap: 6px; font-family: "Noto Sans", sans-serif; font-weight: 600; font-size: 17px; }
.w45 { width: 45px; }
.w59 { width: 59px; }
.w62 { width: 62px; }
.w63 { width: 63px; }
.w77 { width: 77px; }
.dim { color: #434651; }
.sep { width: 1px; height: 30px; background: #434651; flex: none; }
.sep.thick { width: 2px; }
.gap-left { margin-left: 10px; }
.fx { padding: 0 19px 0 21px; gap: 13px; }
.menu { padding: 0 24px 0 20px; gap: 12px; }

.workspace { flex: 1; min-height: 0; display: flex; gap: 6px; padding-top: 6px; }
.tools { width: 71px; flex: none; background: #131722; border-radius: 0 5px 0 0; padding-top: 9px; display: flex; flex-direction: column; align-items: center; position: relative; height: 100%; max-height: 100%; }
.tools > button { height: 49px; }
.tools > button > svg[viewBox^="-18"] { width: 37px; height: 37px; fill: none; stroke: #d1d4dc; stroke-width: 1.500; }
.tools > button.accent > svg { stroke: #2962ff; }
.rule { width: 49px; height: 17px; flex: none; background: linear-gradient(#434651, #434651) center / 100% 1px no-repeat; }
.tools > .handle { position: absolute; right: -3px; top: 599px; width: 11px; height: 36px; background: #131722; border: 1px solid #2a2e39; border-radius: 5px; }

.chart { flex: 1; min-width: 0; display: grid; grid-template-columns: minmax(0, 1fr) 71px; grid-template-rows: minmax(0, 1fr) 38px 53px; background: linear-gradient(#181c27, #131722 75%); border-radius: 5px 0 4px 0; overflow: hidden; }
.plot { position: relative; overflow: hidden; }
.canvas, .price-axis, .time-axis { display: block; width: 100%; height: 100%; overflow: hidden; }
.time-axis { border-top: 1px solid #2a2e39; }
.axis-btn { border-top: 1px solid #2a2e39; }
.note, .tick { font-family: "Noto Sans", sans-serif; font-size: 15px; }
.note, .price-text { font-size: 16px; }
.tick { fill: #b2b5be; }
.tick.on { fill: #fff; }
.event { font: 700 16px "Noto Sans", sans-serif; fill: #00c805; }

.overlay { position: absolute; left: 5px; top: 5px; right: 0; display: flex; flex-direction: column; align-items: flex-start; }
.title-row { display: flex; align-items: center; height: 33px; padding: 0 6px; margin-bottom: 3px; background: rgba(27, 31, 41, .6); font-size: 18px; white-space: nowrap; }
.title-row h1 { margin: 0; font-size: 22px; font-weight: 400; }
.pill { width: 24px; height: 24px; border-radius: 50%; background: #363a45; margin: 0 12px 0 11px; display: flex; align-items: center; justify-content: center; }
.pill i { width: 14px; height: 6px; border-radius: 3px; background: #a3a6af; }
.ohlc { margin-left: 9px; }
.ohlc b { font-weight: 400; color: #f23645; }
.legend { height: 25px; margin-bottom: 8px; padding: 0 6px; display: flex; align-items: center; gap: 5px; font-size: 18px; background: rgba(23, 27, 37, .5); white-space: nowrap; }
.legend .args { color: #868993; }
.legend.off { color: #50535e; }
.legend.off .args { color: #50535e; }
.val { margin-left: 4px; }
.val + .val { margin-left: 2px; }
.eye { margin-left: 7px; }
.red { color: #f7525f; }
.purple { color: #9c27b0; }
.green { color: #4caf50; }
.orange { color: #ff6d00; }
.blue { color: #2196f3; }
.collapse { width: 39px; height: 28px; margin-left: 7px; border: 1px solid #363a45; border-radius: 4px; }

.range-bar { grid-column: 1 / -1; display: flex; align-items: center; border-top: 1px solid #2a2e39; padding: 0 14px 0 19px; }
.range-bar button { min-width: 20px; margin-right: 16px; }
.range-bar .calendar { margin-left: 18px; }
.range-bar .clock { margin-right: 14px; }
.range-bar .clock + .sep { margin-right: 14px; }
.range-bar button:last-child { margin-right: 0; }

.quote { width: 418px; flex: none; display: flex; flex-direction: column; background: #2f333c; color: #eef0f3; border-radius: 4px; overflow: hidden; padding-top: 11px; }
.quote-head, .quote-sub { display: flex; align-items: center; padding: 0 17px 0 14px; font-size: 22px; line-height: 28px; }
.quote-head { justify-content: space-between; }
.quote-head h2 { margin: 0; font-size: 22px; color: #fff; }
.quote-head strong { margin-top: 4px; color: #fff; }
.quote-sub { margin-top: 11px; gap: 5px; height: 32px; }
.quote-sub a { color: #6ea8ff; text-decoration: none; }
.quote-sub strong { margin-left: auto; color: #ef5540; }
.edit { width: 32px; height: 32px; border: 1px solid #464a54; border-radius: 3px; margin-left: 4px; }
.switch { display: flex; margin: 21px 14px 0; border: 1px solid #464a54; border-radius: 3px; height: 32px; font-family: "Noto Sans", sans-serif; font-size: 18px; }
.switch button { flex: 1 0 auto; padding: 0 10px; border-right: 1px solid #464a54; }
.switch button:last-child { border-right: 0; }
.switch button.on { background: #2e72d6; margin: -1px 0; }

table { width: 100%; border-collapse: collapse; table-layout: fixed; flex: none; white-space: nowrap; }
td, th { padding: 0; }
.c6 { width: 6px; }
.c80 { width: 80px; }
.c82 { width: 82px; }
.c84 { width: 84px; }
.c90 { width: 90px; }
.c122 { width: 122px; }
.r { text-align: right; padding-right: 8px; }
.l { text-align: left; padding-left: 8px; }
.book { margin-top: 14px; border-bottom: 1px dashed #3a3f47; }
.book th { height: 46px; }
.book tbody tr { height: 47px; }
.book tbody tr:nth-child(2) { height: 46px; }
.book tbody tr:nth-child(odd), .trades tbody tr:nth-child(odd) { background: #282c33; }
.bv { padding-left: 17px; }
.av { text-align: right; padding-right: 17px; }
.price { position: relative; color: #ef5540; }
.price b { position: relative; }
.price.floor { color: #00c8c0; }
.bar { position: absolute; left: 0; top: 6px; bottom: 6px; background: rgba(150, 35, 40, .3); }
.bar.right { left: auto; right: 0; }
.floor .bar { background: rgba(20, 120, 115, .35); }
.trades-wrap { position: relative; flex: 1 0 326px; border-bottom: 5px solid #24282e; }
.trades th { height: 46px; text-align: right; }
.trades th:first-child, .trades td:first-child { text-align: left; padding-left: 12px; }
.trades tbody tr { height: 45px; }
.trades td { text-align: right; }
.trades td b { color: #ef5540; }
.trades td:last-child, .trades th:last-child { padding-right: 12px; }
.trades .buy { color: #0a0; }
.trades .sell { color: #ef5540; }
.totals tbody tr { height: 46px; }
.totals tbody tr:nth-child(odd) { background: #2f333c; }
.totals tbody tr:nth-child(even) { background: #282c33; }
.thumb { position: absolute; right: 4px; top: 48px; width: 8px; height: 41px; border-radius: 4px; background: #56646d; }
</style>
